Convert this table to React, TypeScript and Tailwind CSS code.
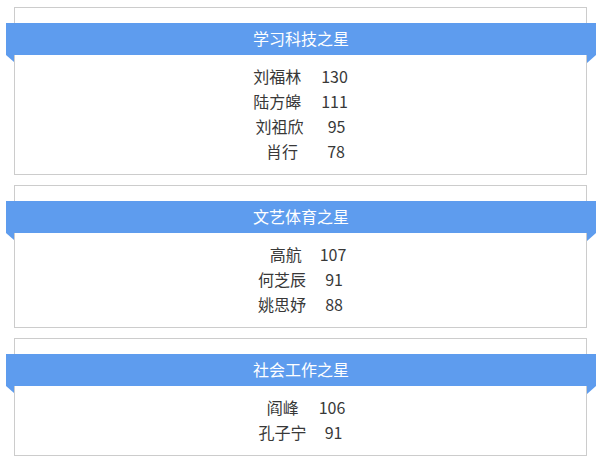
import React from 'react';

type Row = { name: string; score: number; lead: string; gap: string };
type Section = { title: string; rows: Row[] };

const sections: Section[] = [
  {
    title: '学习科技之星',
    rows: [
      { name: '刘福林', score: 130, lead: 'pl-0', gap: 'ml-[20px]' },
      { name: '陆方皞', score: 111, lead: 'pl-0', gap: 'ml-[20px]' },
      { name: '刘祖欣', score: 95, lead: 'pl-0', gap: 'ml-[24px]' },
      { name: '肖行', score: 78, lead: 'pl-[10px]', gap: 'ml-[29px]' },
    ],
  },
  {
    title: '文艺体育之星',
    rows: [
      { name: '高航', score: 107, lead: 'pl-[15px]', gap: 'ml-[18px]' },
      { name: '何芝辰', score: 91, lead: 'pl-0', gap: 'ml-[19px]' },
      { name: '姚思妤', score: 88, lead: 'pl-0', gap: 'ml-[19px]' },
    ],
  },
  {
    title: '社会工作之星',
    rows: [
      { name: '阎峰', score: 106, lead: 'pl-[11px]', gap: 'ml-[20px]' },
      { name: '孔子宁', score: 91, lead: 'pl-0', gap: 'ml-[18px]' },
    ],
  },
];

function Card({ section }: { section: Section }) {
  return (
    <div className="border border-[#cccccc] bg-white pt-[15px] pb-[11px]">
      {/* ribbon header */}
      <div className="relative -ml-[9px] -mr-[10px] h-[32px] pb-[2px] bg-[#5e9cee] flex items-center justify-center text-white text-[16px]">
        {section.title}
        <div className="absolute left-0 top-full w-0 h-0 border-t-[7px] border-t-[#5e9cee] border-l-[8px] border-l-transparent" />
        <div className="absolute right-0 top-full w-0 h-0 border-t-[8px] border-t-[#5e9cee] border-r-[9px] border-r-transparent" />
      </div>

      <div className="pt-[8px]">
        {section.rows.map((r) => (
          <div key={r.name} className="h-[25px] flex items-center justify-center text-[16px] text-[#383838]">
            <div className={`flex items-center ${r.lead}`}>
              <span>{r.name}</span>
              <span className={r.gap}>{r.score}</span>
            </div>
          </div>
        ))}
      </div>
    </div>
  );
}

export default function App() {
  return (
    <div
      className="w-[601px] h-[467px] bg-white pt-[7px] px-[14px] flex flex-col gap-[10px] overflow-hidden"
      style={{ fontFamily: '"Noto Sans CJK SC", "Noto Sans", sans-serif' }}
    >
      {sections.map((s) => (
        <Card key={s.title} section={s} />
      ))}
    </div>
  );
}
